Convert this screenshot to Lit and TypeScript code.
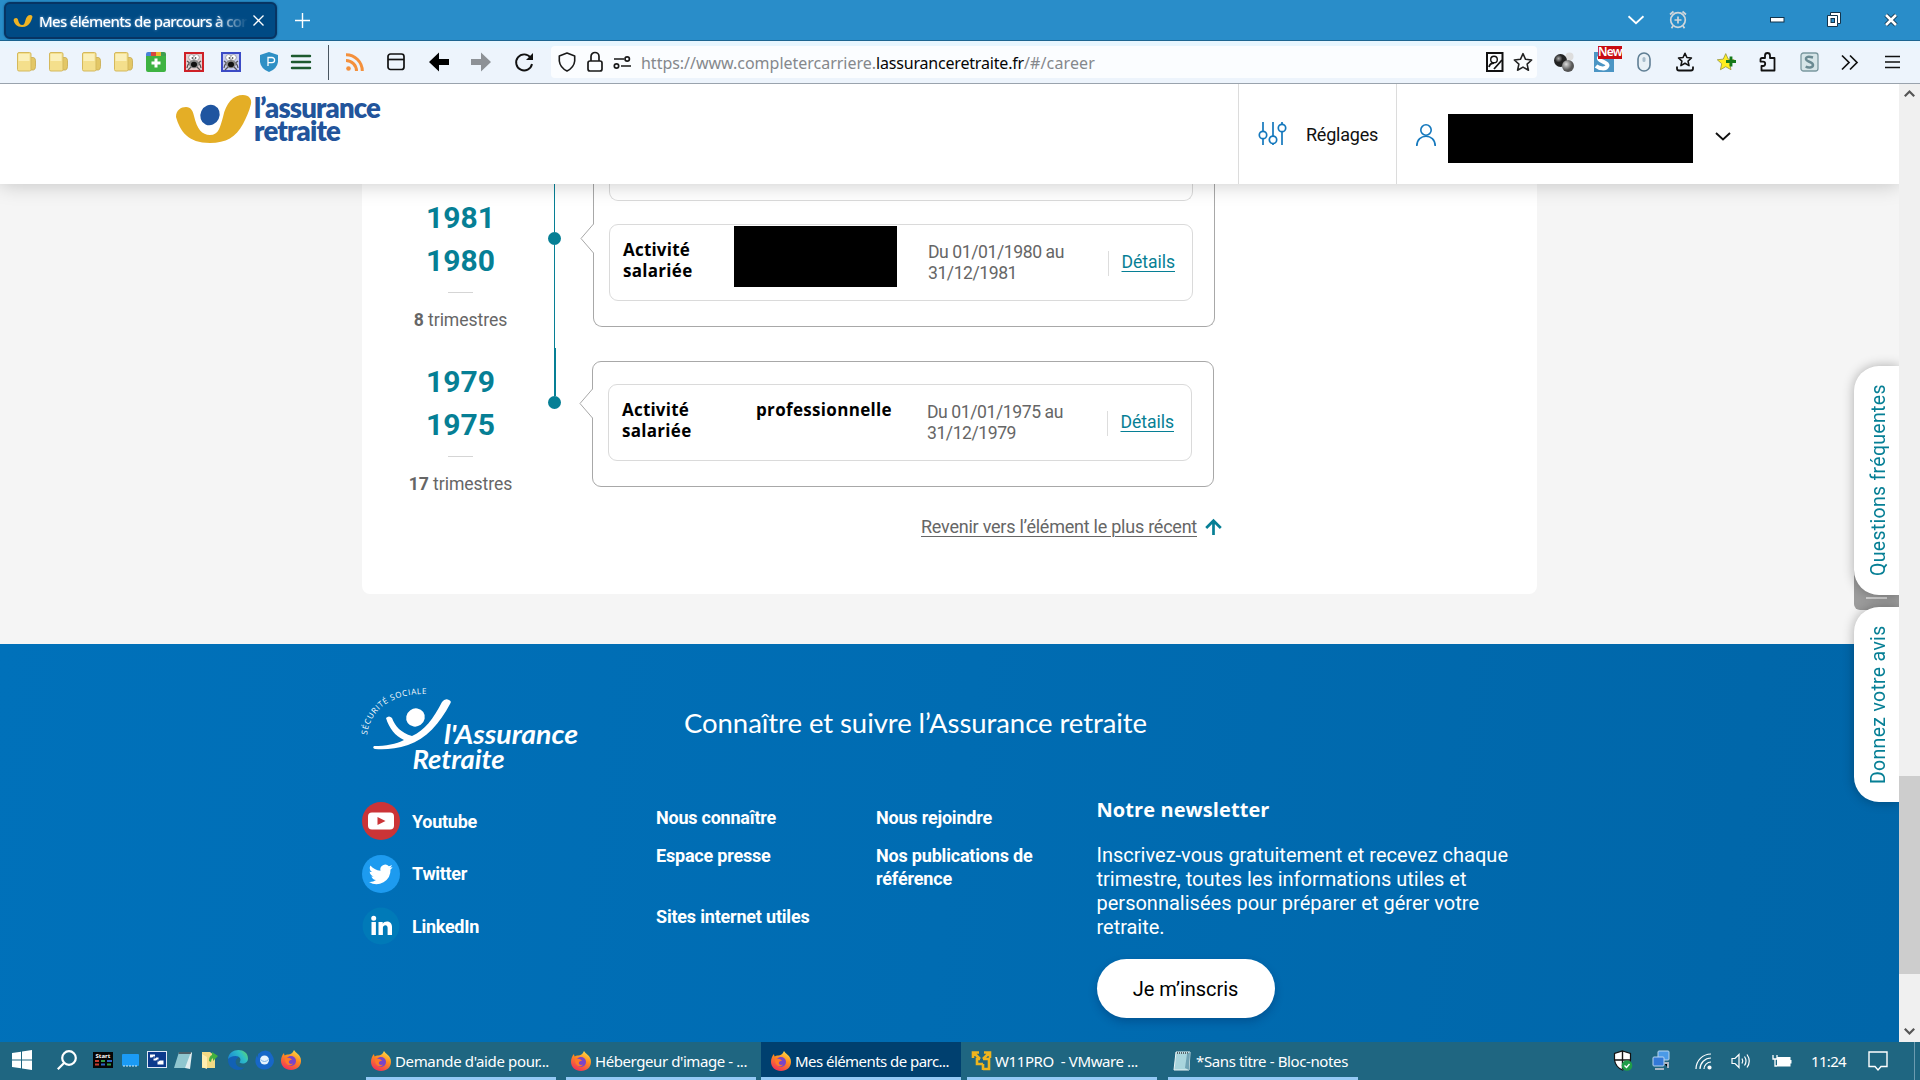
import { LitElement, html, svg, css, nothing, TemplateResult } from "lit";
import { customElement, property } from "lit/decorators.js";

/* Adjusts the tracking of every [data-w] text so that it spans its nominal width. */
function fitText(root: ParentNode) {
  root.querySelectorAll<HTMLElement>("[data-w]").forEach((el) => {
    const goal = Number(el.dataset.w);
    el.style.letterSpacing = "0px";
    const natural = el.getBoundingClientRect().width;
    const count = (el.textContent ?? "").length;
    if (natural > 0 && count > 1) {
      el.style.letterSpacing = `${((goal - natural) / count).toFixed(3)}px`;
    }
  });
}

const shared = css`
  * { box-sizing: border-box; }
  svg { display: block; overflow: visible; }
  [data-w] { display: inline-block; white-space: pre; }
`;

const folder = html`<svg width="19" height="20" viewBox="0 0 19 20">
  <path d="M12 5.500h4.500q2 .5 2 3v6q0 3-2 3.500H12z" fill="#e3c766" stroke="#c7a94c" stroke-width=".8"/>
  <rect x=".5" y=".5" width="13.500" height="18.500" rx="1.500" fill="#f4df8c" stroke="#d5b95c"/>
  <path d="M1.500 2h11v7h-11z" fill="#fbf0b9"/></svg>`;

const spider = (c: string, bg: string) => html`<svg width="20" height="20" viewBox="0 0 20 20">
  <rect x="1" y="1" width="18" height="18" fill="${bg}" stroke="${c}" stroke-width="2"/>
  <path d="M3 16q1-6 5-5M17 16q-1-6-5-5M3 9l4 3M17 9l-4 3M4 18l4-4M16 18l-4-4" stroke="#555" fill="none" stroke-width="1.200"/>
  <ellipse cx="10" cy="12" rx="5" ry="4.200" fill="#888"/><ellipse cx="10" cy="12.500" rx="3" ry="2.800" fill="#111"/>
  <ellipse cx="7.500" cy="5.500" rx="2.800" ry="2.900" fill="#fff" stroke="#777" stroke-width=".6"/><ellipse cx="12.500" cy="5.500" rx="2.800" ry="2.900" fill="#fff" stroke="#777" stroke-width=".6"/>
  <circle cx="8.300" cy="6" r=".7"/><circle cx="11.700" cy="6" r=".7"/></svg>`;

const firefox = html`<svg width="20" height="20" viewBox="0 0 20 20">
  <defs><linearGradient id="ffx" x1=".8" y1="0" x2=".3" y2="1"><stop offset="0" stop-color="#ffe14a"/><stop offset=".45" stop-color="#ff8a1f"/><stop offset="1" stop-color="#f0305a"/></linearGradient></defs>
  <path d="M13 0c1 1.500 2 2.500 3.500 3.800C18.500 5.500 20 7.500 20 11c0 5.200-4.400 9-10 9S0 16.200 0 10.800C0 7.500 1.200 5 3 3c0 1 .2 1.800.7 2.500C4.800 4.600 6 4.300 7.500 4.500 9.500 4.500 11.500 3.500 13 0z" fill="url(#ffx)"/>
  <circle cx="10" cy="11" r="5" fill="#7a45c8"/><path d="M4 8.500c3-1.500 5.500-.5 7 1.500-1.500 0-3 .4-3.200 1.800C7.600 13.500 9.500 14.500 12 13.500 10.500 16.500 4 16.500 4 8.500z" fill="#ff7a2a"/></svg>`;

const chev = (c: string, w = 15, h = 7) => html`<svg width="${w}" height="${h}" viewBox="0 0 15 7"><path d="M.5 0l7 6.500 7-6.500" fill="none" stroke="${c}" stroke-width="1.700"/></svg>`;
const starPath = "M9 1.500l2.300 5.100 5.500.6-4.100 3.700 1.200 5.500L9 13.600l-4.900 2.800 1.200-5.500L1.200 7.200l5.500-.6z";

@customElement("browser-chrome")
class BrowserChrome extends LitElement {
  static styles = [shared, css`
    :host { display: block; font-family: "Noto Sans", "Open Sans", sans-serif; }
    .tabs { height: 41px; background: #298dc9; border-bottom: 1px solid #1d6591; display: flex; justify-content: space-between; }
    .left { display: flex; align-items: flex-start; padding: 2px 0 0 4px; }
    .tab { width: 273px; height: 37px; border-radius: 6px; background: #004a84; border: 2px solid #073463; box-shadow: 0 0 2px #0b4c7c; display: flex; align-items: center; padding-left: 7px; color: #fff; }
    .title { margin-left: 6px; width: 209px; overflow: hidden; font-size: 15px; line-height: 30px; font-weight: 500; text-shadow: 0 0 3px #7fb2dd; mask-image: linear-gradient(90deg, #000 84%, transparent 100%); white-space: nowrap; }
    .close { margin-left: 5px; }
    .plus { margin: 11px 0 0 18px; }
    .win { display: grid; grid-template-columns: 41px 101px 57px 57px 36px; height: 40px; align-items: center; padding-bottom: 1px; }
    .bar { height: 43px; background: linear-gradient(#e7f6ff 0 5px, #edf4fc 8px); border-bottom: 1px solid #9aa3ad; display: grid; align-items: center; padding-left: 17px;
      grid-template-columns: 32px 33px 32px 32px 38px 37px 39px 31px 37px 18px 41px 42px 42px 44px 36px 986px 57px 43px 39px 40px 43px 41px 41px 44px 1fr; }
    .sep { width: 1px; height: 35px; background: #4a5560; }
    .url { height: 32px; width: 986px; background: #fbfdff; border-radius: 4px; display: grid; grid-template-columns: 29px 26px 28px 845px 27px 20px; align-items: center; padding-left: 7px; }
    .addr { font-size: 16px; line-height: 30px; color: #85888c; white-space: pre; padding-top: 1px; }
    .addr b { font-weight: 400; color: #050505; }
    .after { margin-left: 17px; }
    .new { position: relative; }
    .badge { position: absolute; left: 4px; top: -6px; width: 24px; height: 13px; background: #c80c12; color: #fff; font-size: 12px; font-weight: 600; line-height: 12px; }
  `];
  firstUpdated() { fitText(this.renderRoot as ShadowRoot); }
  render() {
    return html`
      <div class="tabs">
        <div class="left">
          <div class="tab">
            <svg width="20" height="12" viewBox="0 0 75 48"><path d="M0 22C0 15 5 12 10 12c5 0 7 4 8 9 3 13 8 19 16 19 9 0 10-8 13-18C50 8 57 0 67 0c6 0 9 4 8 9-2 8-5 14-8 20C60 42 50 48 34 48 12 48 4 36 0 22z" fill="#f0b323"/></svg>
            <div class="title"><span data-w="208">Mes éléments de parcours à cor</span></div>
            <svg class="close" width="11" height="11" viewBox="0 0 11 11"><path d="M.5.5l10 10M10.500.5l-10 10" stroke="#fff" stroke-width="1.300"/></svg>
          </div>
          <svg class="plus" width="15" height="15" viewBox="0 0 15 15"><path d="M7.500 0v15M0 7.500h15" stroke="#fff" stroke-width="1.400"/></svg>
        </div>
        <div class="win">
          ${chev("#fff", 16, 8)}
          <svg width="18" height="19" viewBox="0 0 18 19" fill="none" stroke="#cfd6db" stroke-width="1.700"><circle cx="9" cy="10" r="7.300"/><path d="M9 6.500v7M5.500 10h7M1 4.500L4.500 1.500M17 4.500l-3.500-3M4 16l-1.500 2.300M14 16l1.500 2.300"/></svg>
          <svg width="15" height="6" viewBox="0 0 15 6"><rect x=".5" y=".5" width="13.500" height="4.500" fill="#fff" stroke="#12344d"/></svg>
          <svg width="14" height="15" viewBox="0 0 14 15"><path d="M3.500.5h10v11h-3v3H.5v-11h3z" fill="#fff" stroke="#12344d"/><path d="M3.500 3.500h7v8" stroke="#12344d" fill="none"/><rect x="4" y="6.500" width="3.500" height="4" fill="#298dc9" stroke="#12344d"/></svg>
          <svg width="14" height="14" viewBox="0 0 14 14"><path d="M2 2l10 10M12 2L2 12" stroke="#12344d" stroke-width="4.400"/><path d="M2 2l10 10M12 2L2 12" stroke="#fff" stroke-width="2.600"/></svg>
        </div>
      </div>
      <div class="bar">
        ${folder}${folder}${folder}${folder}
        <svg width="20" height="20" viewBox="0 0 20 20"><path d="M0 5h5V0H2Q0 0 0 2z" fill="#4a83d8"/><path d="M5 0h5v5H5z" fill="#d8473c"/><path d="M10 0h5v5h-5z" fill="#edb92f"/><path d="M15 0h3q2 0 2 2v3h-5z" fill="#3f9e50"/><path d="M0 4h20v14q0 2-2 2H2q-2 0-2-2z" fill="#3eb342"/><path d="M10 6.500v9M5.500 11h9" stroke="#fff" stroke-width="3"/></svg>
        ${spider("#cf2026", "#e3d0d0")}${spider("#3c4bc6", "#c8cdf0")}
        <svg width="18" height="20" viewBox="0 0 18 20"><path d="M9 0l9 3v7q-1 7-9 10Q1 17 0 10V3z" fill="#2f90c5"/><path d="M8 14V5.500h4a2.500 2.500 0 0 1 0 5.200H8" fill="none" stroke="#fff" stroke-width="1.300"/></svg>
        <svg width="20" height="16" viewBox="0 0 20 16"><path d="M1 2h18M1 8h18M1 14h18" stroke="#1d5a2e" stroke-width="2.400" stroke-linecap="round"/></svg>
        <div class="sep"></div>
        <svg width="18" height="18" viewBox="0 0 18 18" fill="none" stroke="#f4903c"><circle cx="2.500" cy="15.500" r="2.300" fill="#f4903c" stroke="none"/><path d="M0 7.500A10.500 10.500 0 0 1 10.500 18" stroke-width="3"/><path d="M0 1.700A16.300 16.300 0 0 1 16.300 18" stroke-width="3"/></svg>
        <svg width="18" height="18" viewBox="0 0 18 18" fill="none" stroke="#111" stroke-width="1.700"><rect x="1" y="1" width="16" height="15.500" rx="2.500"/><path d="M1 6.500h16"/></svg>
        <svg width="20" height="20" viewBox="0 0 20 20"><path d="M0 10L10 0.500V7h10v6H10v6.500z" fill="#000"/></svg>
        <svg width="20" height="20" viewBox="0 0 20 20"><path d="M20 10L10 .5V7H0v6h10v6.500z" fill="#8d9196"/></svg>
        <svg width="19" height="19" viewBox="0 0 19 19"><path d="M15.500 4.500A8 8 0 1 0 17 11" fill="none" stroke="#111" stroke-width="1.900"/><path d="M18 0v7h-7z" fill="#111"/></svg>
        <div class="url">
          <svg width="18" height="20" viewBox="0 0 18 20" fill="none" stroke="#1a1a1a" stroke-width="1.600"><path d="M9 1l7.700 3v5q-.7 6.500-7.700 10Q2 15.500 1.300 9V4z" stroke-linejoin="round"/></svg>
          <svg width="16" height="20" viewBox="0 0 16 20" fill="none" stroke="#1a1a1a" stroke-width="1.700"><rect x="1" y="9" width="14" height="10" rx="2"/><path d="M4 9V4.500a4 4 0 0 1 8 0V9"/></svg>
          <svg width="18" height="13" viewBox="0 0 18 13" fill="none" stroke="#1a1a1a" stroke-width="1.700"><path d="M1 3h10M8 10h10"/><circle cx="14.200" cy="3" r="2.200"/><circle cx="3.500" cy="10" r="2.200"/></svg>
          <div class="addr"><span data-w="235">https://www.completercarriere.</span><b data-w="148">lassuranceretraite.fr</b><span data-w="71">/#/career</span></div>
          <svg width="18" height="20" viewBox="0 0 18 20" fill="none" stroke="#111" stroke-width="2"><rect x="1" y="1" width="15.500" height="18"/><circle cx="8" cy="7.500" r="3.300" stroke-width="1.400"/><path d="M3 15q1-4 5-4M16 8l-8 9" stroke-width="1.800"/></svg>
          <svg width="20" height="20" viewBox="0 0 18 18"><path d="${starPath}" fill="none" stroke="#222" stroke-width="1.400" stroke-linejoin="round"/></svg>
        </div>
        <svg class="after" width="21" height="20" viewBox="0 0 21 20"><defs><radialGradient id="g1" cx=".35" cy=".35"><stop offset="0" stop-color="#aaa"/><stop offset=".6" stop-color="#222"/></radialGradient><radialGradient id="g2" cx=".35" cy=".35"><stop offset="0" stop-color="#ddd"/><stop offset="1" stop-color="#555"/></radialGradient></defs><circle cx="15.500" cy="4.500" r="4" fill="#ddd"/><circle cx="6.500" cy="8.500" r="6.500" fill="url(#g1)"/><circle cx="14" cy="14" r="6" fill="url(#g2)"/></svg>
        <div class="new"><svg width="20" height="20" viewBox="0 0 20 20"><rect width="20" height="20" fill="#4b95c4"/><path d="M17 5Q11 1 6 4.500C1 9 14 9.500 13.500 13.500 12 18 5 16.500 2 14" fill="none" stroke="#fff" stroke-width="4"/></svg><div class="badge"><span data-w="24">New</span></div></div>
        <svg width="14" height="20" viewBox="0 0 14 20"><rect x="1" y="1" width="12" height="18" rx="6" fill="#e8f0f6" stroke="#5f7e94" stroke-width="1.600"/><rect x="5.500" y="5" width="3" height="5" rx="1.500" fill="#a7bccb"/></svg>
        <svg width="18" height="20" viewBox="0 0 18 20" fill="none" stroke="#111" stroke-width="1.600"><path transform="translate(1.500 0) scale(.83)" d="${starPath}" stroke-linejoin="round" stroke-width="1.900"/><path d="M1 14.500v2q0 2 2 2h12q2 0 2-2v-2" stroke-width="1.800"/></svg>
        <svg width="20" height="20" viewBox="0 0 20 20"><path transform="scale(1.080)" d="${starPath}" fill="#ffee1f" stroke="#9b9a45" stroke-width=".8"/><path d="M15 4.500v10M10 9.500h10" stroke="#157a1b" stroke-width="2.800"/></svg>
        <svg width="18" height="20" viewBox="0 0 18 20" fill="none" stroke="#111" stroke-width="1.800"><path d="M6 6V3.500a2.500 2.500 0 0 1 5 0V6h4.500v12.500H2.500V14H4a2.200 2.200 0 0 0 0-4.400H1.500V7.500Q1.500 6 3 6z" stroke-linejoin="round"/></svg>
        <svg width="19" height="20" viewBox="0 0 19 20"><rect x="1" y="1" width="17" height="18" rx="2.500" fill="#d6e5e8" stroke="#7a989f" stroke-width="1.300"/><path d="M13 5.500q-7-2-7 1.500c0 3 7 2.500 7 6 0 3-5 3-7.300 1.500" fill="none" stroke="#6a8a92" stroke-width="2.500"/></svg>
        <svg width="17" height="15" viewBox="0 0 17 15" fill="none" stroke="#111" stroke-width="1.700"><path d="M1 .5l7 7-7 7M9 .5l7 7-7 7"/></svg>
        <svg width="15" height="14" viewBox="0 0 15 14"><path d="M0 1.500h15M0 7h15M0 12.500h15" stroke="#111" stroke-width="1.500"/></svg>
      </div>`;
  }
}

@customElement("site-header")
class SiteHeader extends LitElement {
  static styles = [shared, css`
    :host { display: block; position: relative; z-index: 2; font-family: Roboto, sans-serif; }
    .head { height: 100px; background: #fff; display: flex; box-shadow: 0 0 20px rgba(0, 0, 0, .22); padding-left: 176px; }
    .mark { margin-top: 11px; }
    .name { margin: 12px 0 0 3px; width: 984px; font-family: Lato, sans-serif; font-weight: 800; font-size: 27.500px; line-height: 23px; color: #22549b; }
    .cell { border-left: 1px solid #dcdcdc; display: flex; align-items: center; }
    .set { width: 158px; padding-left: 20px; font-size: 18px; color: #111; }
    .lbl { margin: 1px 0 0 20px; }
    .sl { margin-top: -2px; }
    .usr { padding-left: 19px; }
    .mask { width: 245px; height: 49px; margin: 9px 22px 0 12px; background: #000; }
    .u { margin-top: 1px; }
    .c { margin-top: 5px; }
  `];
  firstUpdated() { fitText(this.renderRoot as ShadowRoot); }
  render() {
    return html`<div class="head">
      <svg class="mark" width="75" height="48" viewBox="0 0 75 48"><path d="M0 22C0 15 5 12 10 12c5 0 7 4 8 9 3 13 8 19 16 19 9 0 10-8 13-18C50 8 57 0 67 0c6 0 9 4 8 9-2 8-5 14-8 20C60 42 50 48 34 48 12 48 4 36 0 22z" fill="#e4ae26"/><ellipse cx="34" cy="20" rx="9.500" ry="10.500" transform="rotate(25 34 20)" fill="#1f55a0"/></svg>
      <div class="name"><span data-w="126">l’assurance</span><br><span data-w="86">retraite</span></div>
      <div class="cell set">
        <svg class="sl" width="27" height="23" viewBox="0 0 27 23" fill="none" stroke="#1478bd" stroke-width="1.700"><path d="M4 0v9M4 17v6M14 0v14M14 21.500V23M23 0v2M23 10v13"/><circle cx="4" cy="13" r="3.700"/><circle cx="14" cy="17.800" r="3.700"/><circle cx="23" cy="6" r="3.700"/></svg>
        <div class="lbl"><span data-w="72">Réglages</span></div>
      </div>
      <div class="cell usr">
        <svg class="u" width="20" height="22" viewBox="0 0 20 22" fill="none" stroke="#1478bd" stroke-width="1.600"><circle cx="10" cy="6" r="5.200"/><path d="M.8 22c0-13 18.400-13 18.400 0"/></svg>
        <div class="mask"></div>
        <svg class="c" width="16" height="9" viewBox="0 0 16 9"><path d="M1 1l7 6.500L15 1" fill="none" stroke="#111" stroke-width="1.900"/></svg>
      </div>
    </div>`;
  }
}

interface Period { from: string; to: string; n: string; dates: [string, string]; employer: string | null; first: boolean; }

@customElement("career-period")
class CareerPeriod extends LitElement {
  @property({ attribute: false }) p!: Period;
  static styles = [shared, css`
    :host { display: block; font-family: Roboto, sans-serif; }
    .row { display: flex; height: 164px; }
    .years { width: 180px; padding: 11.500px 0 0 17px; display: flex; flex-direction: column; align-items: center; }
    .y { font-size: 30px; font-weight: 700; line-height: 43px; color: #067f95; white-space: nowrap; }
    .dash { width: 25px; height: 1px; background: #d5d5d5; margin: 10.500px 0 16px; }
    .n { font-size: 17.600px; line-height: 22px; color: #666; letter-spacing: -.05px; }
    .axis { width: 25px; display: flex; flex-direction: column; align-items: center; }
    .up { height: 48px; width: 1px; background: #067f95; }
    .thick .up { width: 2px; margin-left: 1px; }
    .dot { width: 13px; height: 13px; border-radius: 50%; background: #067f95; }
    .down { flex: 1; width: 1px; background: #067f95; }
    .card { position: relative; width: 622px; height: 126px; margin: 13px 0 0 25px; border: 1px solid #a8a8a8; border-radius: 9px; padding: 22px 0 0 15px; background: #fff; }
    .card.open { height: 143px; margin: 0 0 0 26px; border-top: 0; border-radius: 0 0 9px 9px; padding-top: 0; }
    .stub { width: 584px; height: 17px; border: 1px solid #dadada; border-top: 0; border-radius: 0 0 9px 9px; margin-bottom: 23px; }
    .notch { position: absolute; left: -14px; top: 26px; }
    .open .notch { top: 39px; }
    .act { width: 584px; height: 77px; border: 1px solid #dadada; border-radius: 9px; display: flex; padding-left: 13px; }
    .kind { width: 111px; padding-top: 13.500px; }
    .t { font-family: "Open Sans", sans-serif; font-weight: 700; font-size: 17px; line-height: 21px; color: #000; }
    .who { width: 194px; }
    .mask { width: 163px; height: 61px; margin-top: 1px; background: #000; }
    .emp { padding: 13.500px 0 0 23px; }
    .dates { width: 180px; padding-top: 17px; font-size: 17.600px; line-height: 21px; color: #666; }
    .link { border-left: 1px solid #ddd; height: 25px; margin-top: 26px; padding-left: 12.500px; }
    a { font-size: 17.600px; line-height: 22px; color: #067f95; text-decoration: underline; text-underline-offset: 3px; text-decoration-thickness: 1px; }
  `];
  firstUpdated() { fitText(this.renderRoot as ShadowRoot); }
  render() {
    const p = this.p;
    return html`<div class="row">
      <div class="years"><div class="y">${p.to}</div><div class="y">${p.from}</div><div class="dash"></div><div class="n"><b>${p.n}</b> trimestres</div></div>
      <div class="axis ${p.first ? "" : "thick"}"><div class="up"></div><div class="dot"></div>${p.first ? html`<div class="down"></div>` : nothing}</div>
      <div class="card ${p.first ? "open" : ""}">
        <svg class="notch" width="14" height="31" viewBox="0 0 14 31"><path d="M14 1H13.500L1 15.500l12.500 14.500H14z" fill="#fff"/><path d="M13.500 0v1L1 15.500l12.500 14.500v1" fill="none" stroke="#a8a8a8"/></svg>
        ${p.first ? html`<div class="stub"></div>` : nothing}
        <div class="act">
          <div class="kind"><div class="t"><span data-w="67">Activité</span></div><div class="t"><span data-w="69.500">salariée</span></div></div>
          <div class="who">${p.employer === null ? html`<div class="mask"></div>` : html`<div class="t emp"><span data-w="136">${p.employer}</span></div>`}</div>
          <div class="dates"><div><span data-w="136">${p.dates[0]}</span></div><div><span data-w="89">${p.dates[1]}</span></div></div>
          <div class="link"><a data-w="53.500">Détails</a></div>
        </div>
      </div>
    </div>`;
  }
}

@customElement("site-footer")
class SiteFooter extends LitElement {
  static styles = [shared, css`
    :host { display: block; font-family: Roboto, sans-serif; color: #fff; }
    .foot { height: 398px; background: linear-gradient(98deg, #0071ba 0%, #006cb2 50%, #0067aa 90%, #0066a9 100%); padding: 41px 0 0 362px; }
    .top { display: flex; height: 108px; }
    h2 { margin: 21.500px 0 0 106px; font-family: Lato, sans-serif; font-weight: 400; font-size: 27.500px; line-height: 32px; }
    .cols { display: flex; }
    .soc { width: 294px; padding-top: 9px; display: flex; flex-direction: column; gap: 14.500px; font-size: 18px; font-weight: 700; }
    .s { display: flex; align-items: center; gap: 12px; height: 38px; }
    .links { display: grid; grid-template-columns: 220px 220.500px; grid-template-rows: 38px 61px 30px; padding-top: 13px; font-size: 18px; font-weight: 700; line-height: 23px; }
    .news { padding-top: 5px; }
    h3 { margin: 0; font-family: "Open Sans", sans-serif; font-weight: 700; font-size: 20px; line-height: 24px; }
    p { margin: 21px 0 0; font-size: 20px; line-height: 24px; }
    .btn { display: flex; width: 178px; height: 59px; margin-top: 20px; border-radius: 30px; background: #fff; color: #000; font-size: 20px; align-items: center; justify-content: center; box-shadow: 0 4px 9px rgba(0, 30, 80, .28); }
    .logo { font-family: Lato, sans-serif; }
  `];
  firstUpdated() { fitText(this.renderRoot as ShadowRoot); }
  render() {
    const social = (name: string, w: number, icon: TemplateResult) => html`<div class="s"><svg width="38" height="38" viewBox="0 0 38 38">${icon}</svg><span data-w=${w}>${name}</span></div>`;
    return html`<div class="foot">
      <div class="top">
        <svg class="logo" width="216" height="86" viewBox="0 0 216 86" fill="#fff">
          <path id="arc" d="M5 50C7 30 24 8 65 9" fill="none"/>
          <text font-size="8" font-family="Open Sans, sans-serif"><textPath href="#arc" textLength="80">SÉCURITÉ SOCIALE</textPath></text>
          <path d="M24 33q3-3 6 0C33 41 39 48 50 51 62 46 72 33 80 17q3-4 7-2 3 1 1 4C78 38 64 54 46 60 34 64 22 65 13 64q-3-1-1-3C24 61 34 59 42 55 33 51 27 43 24 33z"/>
          <ellipse cx="53.500" cy="32.500" rx="9.500" ry="9" transform="rotate(-35 53.500 32.500)"/>
          <g font-weight="700" font-style="italic" font-size="27.500"><text x="82" y="59" textLength="134" lengthAdjust="spacingAndGlyphs">l'Assurance</text><text x="50.500" y="83.500" textLength="92" lengthAdjust="spacingAndGlyphs">Retraite</text></g>
        </svg>
        <h2><span data-w="463">Connaître et suivre l’Assurance retraite</span></h2>
      </div>
      <div class="cols">
        <div class="soc">
          ${social("Youtube", 65, svg`<circle cx="19" cy="19" r="19" fill="#cb3437"/><rect x="6" y="10.500" width="26" height="17" rx="4" fill="#fff"/><path d="M15.500 15l8 4-8 4z" fill="#cb3437"/>`)}
          ${social("Twitter", 55, svg`<circle cx="19" cy="19" r="19" fill="#1d9bf0"/><path transform="translate(7 7)" d="M23.600 4.900c-.9.400-1.800.7-2.800.8 1-.6 1.800-1.600 2.200-2.700-1 .6-2 1-3.100 1.200A4.900 4.900 0 0 0 11.500 8.700C7.400 8.500 3.800 6.500 1.400 3.600.1 5.800.7 8.700 2.900 10.100c-.8 0-1.600-.2-2.200-.6-.1 2.300 1.600 4.400 3.900 4.900-.7.200-1.500.2-2.200.1.600 2 2.400 3.400 4.600 3.400A9.900 9.900 0 0 1 0 19.900a14 14 0 0 0 21.500-12.400c.8-.7 1.500-1.500 2.100-2.600z" fill="#fff"/>`)}
          ${social("LinkedIn", 67, svg`<circle cx="19" cy="19" r="18.500" fill="#007ab8"/><path d="M9.500 15h4.400v13H9.500zM11.700 8.800a2.500 2.500 0 1 1 0 5 2.500 2.500 0 0 1 0-5zM16.500 15h4.200v1.800c1.800-3.400 9.300-3.400 9.300 3V28h-4.400v-7.300c0-3.500-4.700-3.200-4.700 0V28h-4.400z" fill="#fff"/>`)}
        </div>
        <div class="links">
          <span><span data-w="120">Nous connaître</span></span><span><span data-w="116">Nous rejoindre</span></span>
          <span><span data-w="114.500">Espace presse</span></span><span><span data-w="156.500">Nos publications de</span><br><span data-w="76">référence</span></span>
          <span><span data-w="153.500">Sites internet utiles</span></span>
        </div>
        <div class="news">
          <h3><span data-w="173">Notre newsletter</span></h3>
          <p><span data-w="411.500">Inscrivez-vous gratuitement et recevez chaque</span><br><span data-w="370">trimestre, toutes les informations utiles et</span><br><span data-w="382.500">personnalisées pour préparer et gérer votre</span><br><span data-w="68">retraite.</span></p>
          <div class="btn"><span data-w="105.500">Je m’inscris</span></div>
        </div>
      </div>
    </div>`;
  }
}

@customElement("task-bar")
class TaskBar extends LitElement {
  static styles = [shared, css`
    :host { display: block; font-family: "Noto Sans", "Open Sans", sans-serif; color: #fff; }
    .bar { height: 38px; background: #1f6681; display: flex; }
    .quick { width: 366px; display: grid; grid-template-columns: 45px 36px 29px 25px 27px 27px 27px 27px 26px 30px; padding: 0 0 2px 12px; align-items: center; }
    .task { width: 190px; margin-right: 10px; border-bottom: 3px solid #94c9f5; display: flex; align-items: center; gap: 4px; padding-left: 5px; font-size: 15px; line-height: 20px; padding-top: 2px; }
    .active { width: 200px; margin: 0 6px 0 -5px; padding-left: 10px; background: #00406f; }
    .wide { margin-right: 11px; }
    .tray { flex: 1; margin-left: 245px; display: grid; grid-template-columns: 39px 43px 36px 41px 39px 57px 46px 1px; align-items: center; font-size: 15px; }
    .end { width: 1px; height: 38px; background: #6b9bb0; }
  `];
  firstUpdated() { fitText(this.renderRoot as ShadowRoot); }
  render() {
    const note = html`<svg width="19" height="20" viewBox="0 0 19 20"><path d="M3 1h14l-1 18H1z" fill="#a9d5dd" stroke="#e9f4f5"/><path d="M4 2h12" stroke="#58646a" stroke-width="2" stroke-dasharray="1 1"/><path d="M14 3l3-2-1 18-4-2z" fill="#6fa3b5"/></svg>`;
    const task = (icon: TemplateResult, text: string, w: number, cls = "") => html`<div class="task ${cls}">${icon}<span data-w=${w}>${text}</span></div>`;
    return html`<div class="bar">
      <div class="quick">
        <svg width="20" height="20" viewBox="0 0 20 20" fill="#fff"><path d="M0 3l9-1.300V9.500H0zM10 1.500L20 0v9.500H10zM0 10.500h9v7.800L0 17zM10 10.500h10V20l-10-1.500z"/></svg>
        <svg width="20" height="20" viewBox="0 0 20 20" fill="none" stroke="#fff" stroke-width="2.200"><circle cx="12" cy="8" r="6.800"/><path d="M7 13L.8 19.300"/></svg>
        <svg width="20" height="17" viewBox="0 0 20 17"><rect width="20" height="16" fill="#050505"/><text x="2.500" y="6" font-size="6" font-weight="700" fill="#fff">Start</text><path d="M2 9h4M2 12.500h4" stroke="#c43c30" stroke-width="2"/><path d="M8 9h4M14 12.500h4" stroke="#2f9b4a" stroke-width="2"/><path d="M14 9h5M8 12.500h4" stroke="#2f62c4" stroke-width="2"/></svg>
        <svg width="17" height="13" viewBox="0 0 17 13"><rect width="17" height="12" rx="1" fill="#1b9bf5"/><path d="M1 12h15" stroke="#d5efff" stroke-dasharray="2 1"/></svg>
        <svg width="20" height="18" viewBox="0 0 20 18"><rect x=".5" y=".5" width="19" height="16" fill="#0c3a8c" stroke="#dfe8f5"/><path d="M2.500 3h6v4h-6zM6 6h6v4H6zM10 9h7v5h-7z" fill="#fff" stroke="#0c3a8c"/></svg>
        <svg width="18" height="19" viewBox="0 0 18 19"><path d="M5 1h12l-2 16H0z" fill="#8fc6cf"/><path d="M17 1l1 1-2 16-5-1z" fill="#e1edef"/><path d="M5 1h12l-.3 2H4.500z" fill="#4c5f68"/></svg>
        <svg width="17" height="20" viewBox="0 0 17 20"><path d="M1 2h8l5 4v12H1z" fill="#f3da85"/><path d="M1 4l5 3v12l-5-2z" fill="#ffeeb0"/><path d="M8 11q0-5 3-6V2l6 4-5 5V8q-2 1-2 4z" fill="#43b03f"/></svg>
        <svg width="20" height="20" viewBox="0 0 20 20"><defs><linearGradient id="eg" x1="0" y1=".5" x2="1" y2="0"><stop offset="0" stop-color="#1b8bd6"/><stop offset=".6" stop-color="#2fc0c6"/><stop offset="1" stop-color="#6ad957"/></linearGradient></defs><path d="M0 9a10 10 0 0 0 16.500 8.500C10 18.500 6.500 14 8 10q1-2 3-3C7 4 1 5 0 9z" fill="#1261b4"/><path d="M0 9C1-3 20-3 20 8.500c0 4.500-5 6.500-8.500 4 2.500-3.500 0-6.500-4-6.500C4 6 1 7.500 0 9z" fill="url(#eg)"/></svg>
        <svg width="19" height="20" viewBox="0 0 19 20"><path d="M3 4Q9-2 15 2l2 3q4 6 0 11-6 6-13 2-6-5-2-13l1 3z" fill="#1767c8"/><circle cx="9.500" cy="10" r="4.500" fill="#e8f3fd"/><path d="M5.500 9.500q4 4 8 0" stroke="#7cb4e8" fill="none"/></svg>
        ${firefox}
      </div>
      ${task(firefox, "Demande d'aide pour...", 154)}
      ${task(firefox, "Hébergeur d'image - ...", 152)}
      ${task(firefox, "Mes éléments de parc...", 154, "active")}
      ${task(html`<svg width="19" height="20" viewBox="0 0 19 20" fill="none" stroke="#efb51d" stroke-width="2.600"><path d="M1 7V1.500h6M12 1.500h6V7M2 2l6 6M17 2l-6 6M8 8H5v5h6M11 8h6v10h-6M11 13v6"/></svg>`, "W11PRO  - VMware ...", 143, "wide")}
      ${task(note, "*Sans titre - Bloc-notes", 152, "note")}
      <div class="tray">
        <svg width="20" height="20" viewBox="0 0 20 20"><path d="M9.500 0l8 2.500V9q-1 7-8 10-7-3-8-10V2.500z" fill="#fff" stroke="#111" stroke-width="1.200"/><path d="M9.500 0v18M1.500 9h16" stroke="#111" stroke-width="1.400"/><circle cx="14" cy="14.500" r="5.300" fill="#1f9d48"/><path d="M11.500 14.500l2 2 3-3.500" stroke="#fff" stroke-width="1.400" fill="none"/></svg>
        <svg width="18" height="20" viewBox="0 0 18 20"><rect x="6" y="0" width="11" height="9" rx="1" fill="#4b9ae8" stroke="#b9d5f0"/><rect x="1" y="6" width="11" height="9" rx="1" fill="#3379d8" stroke="#b9d5f0"/><path d="M3 18h9M12 12h4v5" stroke="#a9b6c4" stroke-width="2"/></svg>
        <svg width="17" height="17" viewBox="0 0 17 17" fill="none" stroke="#fff" stroke-width="1.200"><path d="M1 16A15 15 0 0 1 16 1M5 16A11 11 0 0 1 16 5M9 16a7 7 0 0 1 7-7"/><circle cx="14.500" cy="14.500" r="1.500" fill="#fff"/></svg>
        <svg width="20" height="16" viewBox="0 0 20 16" fill="none" stroke="#fff" stroke-width="1.200"><path d="M1 5.500h3L8 1.500v13L4 10.500H1z"/><path d="M11 5.500q1.500 2.500 0 5M13.500 3.500q3 4.500 0 9M16 1.500q4.500 6.500 0 13" /></svg>
        <svg width="20" height="14" viewBox="0 0 20 14"><rect x="5.500" y="3.500" width="12.500" height="8.500" fill="#fff" stroke="#fff"/><path d="M18.500 6v3.500" stroke="#fff" stroke-width="2"/><path d="M1 1v4h4V1M3 5v7h2" stroke="#fff" fill="none" stroke-width="1.300"/></svg>
        <span><span data-w="35">11:24</span></span>
        <svg width="20" height="20" viewBox="0 0 20 20" fill="none" stroke="#fff" stroke-width="1.400"><path d="M1 1h18v14.500h-6L10 19l-3-3.500H1z"/></svg>
        <div class="end"></div>
      </div>
    </div>`;
  }
}

@customElement("app-root")
export class AppRoot extends LitElement {
  static styles = [shared, css`
    :host { display: block; width: 1920px; height: 1080px; overflow: hidden; font-family: Roboto, sans-serif; }
    .view { display: flex; height: 958px; position: relative; }
    .page { width: 1899px; overflow: hidden; background: #f5f5f5; }
    .panel { margin-left: 362px; width: 1175px; height: 410px; background: #fff; border-radius: 0 0 8px 8px; margin-bottom: 50px; }
    .back { display: flex; gap: 8px; width: 860px; justify-content: flex-end; align-items: center; height: 26px; margin-top: 2px; }
    .back a { color: #666; font-size: 18px; line-height: 22px; text-decoration: underline; text-underline-offset: 3px; text-decoration-thickness: 1px; }
    .scroll { width: 21px; background: #f0f0f0; display: flex; flex-direction: column; align-items: center; }
    .a1 { margin: 6px 0 0; }
    .thumb { width: 21px; height: 198px; margin: 679px 0 54px; background: #cdcdcd; }
    .side { position: absolute; z-index: 3; left: 1854px; top: 282px; width: 45px; display: flex; flex-direction: column; clip-path: inset(-20px 0 -20px -30px); }
    .q { height: 229px; z-index: 1; }
    .d { height: 195px; z-index: 1; }
    .pill { position: relative; background: #fff; box-shadow: 0 0 12px rgba(0, 0, 0, .3); color: #067f95; font-size: 19.500px; writing-mode: vertical-rl; transform: rotate(180deg); border-radius: 0 25px 25px 0; display: flex; align-items: center; justify-content: center; line-height: 41px; padding-right: 4px; width: 45px; }
    .pill span { display: inline-block; white-space: pre; letter-spacing: .3px; }
    .grey { height: 40px; margin: -25px 0 -3px; background: #9c9c9c; border-radius: 0 0 0 6px; display: flex; justify-content: center; padding-top: 27px; }
    .grey i { width: 21px; height: 2px; background: #d2d2d2; }
  `];
  firstUpdated() { fitText(this.renderRoot as ShadowRoot); }
  render() {
    const periods: Period[] = [
      { to: "1981", from: "1980", n: "8", dates: ["Du 01/01/1980 au", "31/12/1981"], employer: null, first: true },
      { to: "1979", from: "1975", n: "17", dates: ["Du 01/01/1975 au", "31/12/1979"], employer: "professionnelle", first: false },
    ];
    return html`<browser-chrome></browser-chrome>
      <div class="view">
        <div class="page">
          <site-header></site-header>
          <div class="panel">
            ${periods.map((p) => html`<career-period .p=${p}></career-period>`)}
            <div class="back"><a data-w="276">Revenir vers l’élément le plus récent</a>
              <svg width="17" height="16" viewBox="0 0 17 16" fill="none" stroke="#067f95" stroke-width="2.700"><path d="M8.500 16V2M1.200 9l7.300-7.300L15.800 9"/></svg></div>
          </div>
          <site-footer></site-footer>
        </div>
        <div class="scroll">
          <svg class="a1" width="11" height="7" viewBox="0 0 11 7"><path d="M.8 6.200l4.700-4.700 4.700 4.700" fill="none" stroke="#555" stroke-width="2.200"/></svg>
          <div class="thumb"></div>
          <svg width="11" height="7" viewBox="0 0 11 7"><path d="M.8.8l4.700 4.700L10.200.8" fill="none" stroke="#555" stroke-width="2.200"/></svg>
        </div>
        <div class="side">
          <div class="pill q"><span>Questions fréquentes</span></div>
          <div class="grey"><i></i></div>
          <div class="pill d"><span>Donnez votre avis</span></div>
        </div>
      </div>
      <task-bar></task-bar>`;
  }
}
